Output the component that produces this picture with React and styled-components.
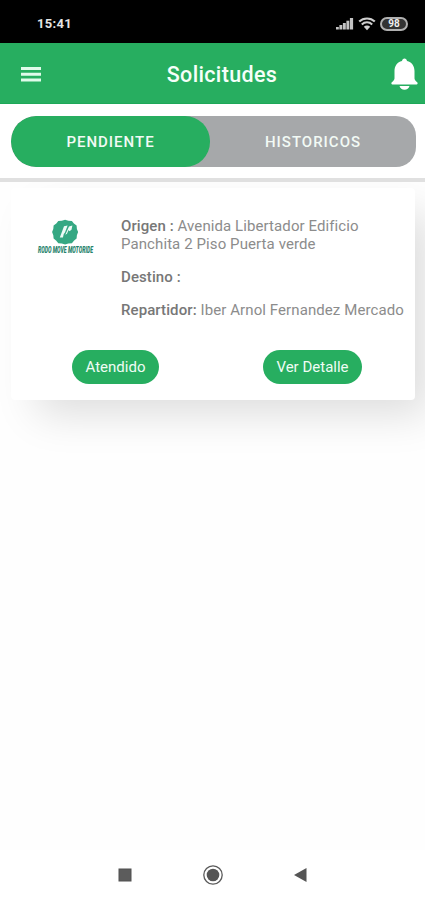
import React from "react";
import styled, { createGlobalStyle } from "styled-components";

const GREEN = "#27ae60";

const GlobalStyle = createGlobalStyle`
  *, *::before, *::after { box-sizing: border-box; }
  body { margin: 0; background: #fff; font-family: Roboto, sans-serif; }
  button { font-family: inherit; border: 0; padding: 0; margin: 0; cursor: pointer; }
  svg { display: block; }
`;

const Screen = styled.div`
  width: 100%;
  height: 900px;
  display: flex;
  flex-direction: column;
  overflow: hidden;
  background: #fefefe;
`;

const StatusBar = styled.div`
  height: 43px;
  flex: none;
  display: flex;
  align-items: center;
  justify-content: space-between;
  padding: 4px 17px 0 37px;
  background: #000;
`;

const Clock = styled.span`
  color: #e4e4e4;
  font-size: 13px;
  font-weight: 700;
  letter-spacing: 0.3px;
`;

const StatusIcons = styled.div`
  display: flex;
  align-items: center;
  gap: 4px;
`;

const Header = styled.header`
  height: 61px;
  flex: none;
  display: grid;
  grid-template-columns: 60px 1fr 60px;
  align-items: center;
  background: ${GREEN};
  border-bottom: 1px solid #1da858;
`;

const IconButton = styled.button`
  display: flex;
  justify-content: ${(p) => p.$align};
  padding: ${(p) => p.$pad};
  background: transparent;
`;

const Title = styled.h1`
  margin: 3px 0 0 19px;
  color: #f5fff9;
  font-size: 21.5px;
  line-height: 26px;
  font-weight: 500;
  letter-spacing: 0.35px;
  text-align: center;
`;

const TabBar = styled.div`
  height: 78px;
  flex: none;
  padding: 12px 9px 0 11px;
  background: #fff;
  border-bottom: 4px solid #e0e0e0;
`;

const Segment = styled.div`
  height: 51px;
  display: flex;
  border-radius: 25px 20px 20px 25px;
  background: #a6a8aa;
  overflow: hidden;
`;

const Tab = styled.button`
  flex: ${(p) => (p.$active ? "0 0 199px" : "1")};
  border-radius: ${(p) => (p.$active ? "25px" : "0")};
  background: ${(p) => (p.$active ? GREEN : "transparent")};
  color: #f2faf5;
  font-size: 15px;
  font-weight: 500;
  letter-spacing: 1px;
`;

const Content = styled.main`
  flex: 1;
  padding: 6px 10px 0 11px;
  background: #fefefe;
  overflow: hidden;
`;

const Card = styled.article`
  height: 212px;
  display: flex;
  flex-direction: column;
  border-radius: 4px;
  background: #fff;
  box-shadow: 20px 20px 40px -6px rgba(0, 0, 0, 0.135);
`;

const CardBody = styled.div`
  height: 162px;
  display: grid;
  grid-template-columns: 110px 1fr;
`;

const LogoBox = styled.div`
  padding: 30px 0 0 26px;
`;

const Details = styled.div`
  padding-top: 29px;
  color: #8c8c8c;
  font-size: 15px;
  line-height: 18px;
  white-space: nowrap;
`;

const Detail = styled.p`
  margin: 0 0 15px;
  letter-spacing: 0.09px;
`;

const Label = styled.span`
  font-weight: 500;
  color: #777;
`;

const Actions = styled.div`
  display: flex;
  padding-left: 61px;
  gap: 104px;
`;

const Action = styled.button`
  width: ${(p) => p.$width}px;
  height: 34px;
  border-radius: 17px;
  background: ${GREEN};
  color: #effcf4;
  font-size: 15px;
  letter-spacing: 0;
`;

const NavBar = styled.nav`
  height: 50px;
  flex: none;
  display: grid;
  grid-template-columns: 88px 88px 88px;
  align-items: center;
  justify-items: center;
  padding-left: 81px;
  background: #fff;
`;

function SignalIcon() {
  return (
    <svg width="18" height="13" viewBox="0 0 18 13" fill="#c4c4c4">
      <rect x="0" y="10" width="2.8" height="2.5" />
      <rect x="3.4" y="8" width="2.9" height="4.5" />
      <rect x="6.9" y="6" width="2.9" height="6.5" />
      <rect x="10.4" y="3.7" width="2.9" height="8.8" />
      <rect x="13.9" y="1" width="3.2" height="11.5" />
    </svg>
  );
}

function WifiIcon() {
  return (
    <svg width="18" height="14" viewBox="0 0 18 14" fill="none" stroke="#cfcfcf" strokeWidth="2.1">
      <path d="M1.2 4.6C5.5.5 12.500.5 16.800 4.600" />
      <path d="M3.800 7.400c3-2.900 7.400-2.900 10.400 0" />
      <path d="M5.800 9.700c1.900-1.600 4.500-1.600 6.400 0L9 13.200z" fill="#cfcfcf" stroke="none" />
    </svg>
  );
}

const Battery = styled.span`
  width: 28px;
  height: 14px;
  display: flex;
  align-items: center;
  justify-content: center;
  border: 2px solid #b0b0b0;
  border-radius: 7px;
  background: #333;
  color: #f0f0f0;
  font-size: 10px;
  line-height: 10px;
  font-weight: 700;
`;

function MenuIcon() {
  return (
    <svg width="20" height="15" viewBox="0 0 20 15" fill="#e0fbea">
      <path d="M0 0h20v3H0zM0 5.8h20v3H0zM0 11.6h20v3H0z" />
    </svg>
  );
}

function BellIcon() {
  return (
    <svg width="27" height="32" viewBox="0 0 27 32" fill="#fff">
      <path d="M13.5.5c1.3 0 2.3 1 2.5 2.400 4.800 1.100 7.500 5 7.500 10v7.400c0 1.200.6 2 1.500 2.900l1.400 1.400c.5.6.2 1.900-.8 1.900H1.400c-1 0-1.300-1.300-.8-1.900L2 23.200c.9-.9 1.500-1.700 1.500-2.900v-7.400c0-5 2.700-8.900 7.500-10C11.200 1.500 12.200.5 13.500.5z" />
      <path d="M8.500 28h10c-.5 2.200-2.600 3.700-5 3.700S9 30.200 8.500 28z" />
    </svg>
  );
}

function CompanyLogo() {
  return (
    <svg width="58" height="40" viewBox="0 0 58 40">
      <path
        d="M28.100 1.700l3.300 1 3.500.2 2 2.600 2.700 2.100.3 3.400 1.200 3.100-1.200 3.100-.3 3.400-2.700 2.100-2 2.600-3.500.2-3.300 1-3.300-1-3.500-.2-2-2.600-2.700-2.100-.3-3.400-1.200-3.100 1.200-3.100.3-3.400 2.700-2.100 2-2.600 3.500-.2z"
        fill="#35a883"
      />
      <path
        d="M22.800 19.500l4.200-11.200 3.600-.8-2.600 7-1.200 1.600-.9 3.400zM28.300 16.800l3.700-8.300 3.400-1-.9 4.200-2.100 1.600-.8-1.200-1.600 3.700z"
        fill="#eefaf6"
      />
      <text
        x="1"
        y="18.200"
        transform="scale(1 1.950)"
        textLength="55"
        lengthAdjust="spacingAndGlyphs"
        fill="#27836c"
        fontFamily="Roboto, sans-serif"
        fontSize="4.900"
        fontWeight="900"
        fontStyle="italic"
      >
        RODO MOVE MOTORIDE
      </text>
    </svg>
  );
}

export default function App() {
  return (
    <>
      <GlobalStyle />
      <Screen>
        <StatusBar>
          <Clock>15:41</Clock>
          <StatusIcons>
            <SignalIcon />
            <WifiIcon />
            <Battery>98</Battery>
          </StatusIcons>
        </StatusBar>
        <Header>
          <IconButton $align="flex-start" $pad="2px 0 0 21px" aria-label="Menu">
            <MenuIcon />
          </IconButton>
          <Title>Solicitudes</Title>
          <IconButton $align="flex-end" $pad="1px 7px 0 0" aria-label="Notificaciones">
            <BellIcon />
          </IconButton>
        </Header>
        <TabBar>
          <Segment>
            <Tab $active>PENDIENTE</Tab>
            <Tab>HISTORICOS</Tab>
          </Segment>
        </TabBar>
        <Content>
          <Card>
            <CardBody>
              <LogoBox>
                <CompanyLogo />
              </LogoBox>
              <Details>
                <Detail>
                  <Label>Origen :</Label> Avenida Libertador Edificio
                  <br />
                  Panchita 2 Piso Puerta verde
                </Detail>
                <Detail>
                  <Label>Destino :</Label>
                </Detail>
                <Detail>
                  <Label>Repartidor:</Label> Iber Arnol Fernandez Mercado
                </Detail>
              </Details>
            </CardBody>
            <Actions>
              <Action $width={87}>Atendido</Action>
              <Action $width={99}>Ver Detalle</Action>
            </Actions>
          </Card>
        </Content>
        <NavBar>
          <svg width="14" height="14" viewBox="0 0 14 14">
            <rect x="1" y="1" width="12" height="12" fill="#5c5c5c" stroke="#505050" />
          </svg>
          <svg width="22" height="22" viewBox="0 0 22 22">
            <circle cx="11" cy="11" r="9.200" fill="#fff" stroke="#5a5a5a" strokeWidth="1.300" />
            <circle cx="11" cy="11" r="6.300" fill="#555" />
          </svg>
          <svg width="14" height="14" viewBox="0 0 14 14">
            <path d="M12.500 0v14L0 7z" fill="#555" />
          </svg>
        </NavBar>
      </Screen>
    </>
  );
}
